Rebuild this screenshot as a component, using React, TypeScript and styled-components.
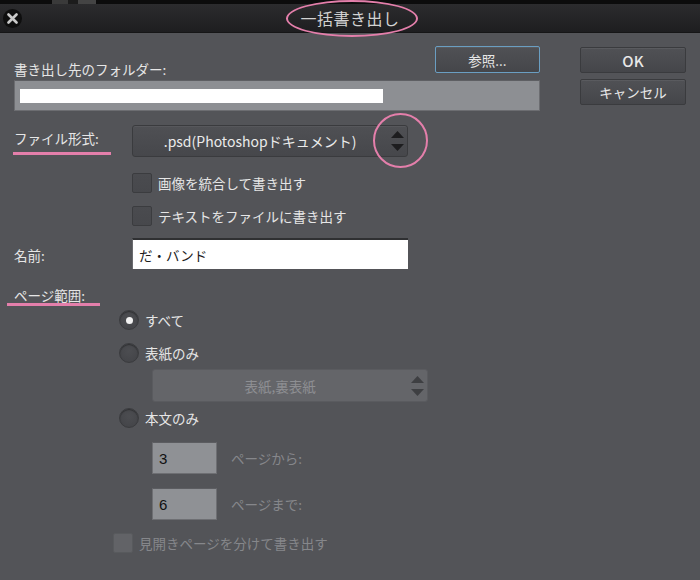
import React from 'react';
import styled, { createGlobalStyle } from 'styled-components';

const Global = createGlobalStyle`
  html, body { margin: 0; padding: 0; background: #535458; }
  body { font-family: "Noto Sans CJK JP", "Noto Sans", sans-serif; overflow: hidden; }
  * { box-sizing: border-box; }
`;

const PINK = '#e47fab';

const Window = styled.div`
  width: 700px;
  height: 580px;
  display: flex;
  flex-direction: column;
  background: #535458;
  overflow: hidden;
`;

const TopStrip = styled.div`
  height: 4px;
  background: #0c0c0c;
  display: flex;
`;

const StripBit = styled.div<{ $w: number; $c: string }>`
  width: ${p => p.$w}px;
  background: ${p => p.$c};
`;

const TitleBar = styled.div`
  height: 29px;
  display: grid;
  grid-template-columns: 1fr auto 1fr;
  align-items: center;
  background: linear-gradient(#2c2c2e, #1e1e20);
  border-bottom: 1px solid #161617;
`;

const CloseButton = styled.div`
  justify-self: start;
  margin-left: 3px;
  width: 19px;
  height: 19px;
  border-radius: 50%;
  background: #0e0e0e;
  display: flex;
  align-items: center;
  justify-content: center;
`;

const Title = styled.div`
  position: relative;
  font-size: 16px;
  color: #d2d2d2;
  line-height: 20px;
  letter-spacing: 0.5px;
`;

const Ring = styled.div<{ $l: number; $t: number; $w: number; $h: number }>`
  position: absolute;
  left: ${p => p.$l}px;
  top: ${p => p.$t}px;
  width: ${p => p.$w}px;
  height: ${p => p.$h}px;
  border: 2.5px solid ${PINK};
  border-radius: 50%;
  pointer-events: none;
  z-index: 2;
`;

const Body = styled.div`
  flex: 1;
  display: grid;
  grid-template-columns: 526px 106px;
  column-gap: 40px;
  padding: 0 14px;
  align-items: start;
`;

const LeftCol = styled.div`
  display: flex;
  flex-direction: column;
`;

const RightCol = styled.div`
  display: flex;
  flex-direction: column;
  gap: 6px;
  margin-top: 14px;
`;

const Button = styled.div<{ $focus?: boolean; $w?: number; $size?: number }>`
  width: ${p => p.$w ?? 106}px;
  height: ${p => (p.$focus ? 27 : 26)}px;
  display: flex;
  align-items: center;
  justify-content: center;
  border-radius: 2px;
  border: 1px solid ${p => (p.$focus ? '#6a9ec2' : '#3a3b3e')};
  background: linear-gradient(#505155, #45464a);
  box-shadow: inset 0 1px 0 rgba(255, 255, 255, 0.06);
  color: #e8e8e8;
  font-size: ${p => p.$size ?? 13.5}px;
  font-weight: ${p => (p.$size && p.$size > 14 ? 500 : 400)};
`;

const FolderHeader = styled.div`
  margin-top: 13px;
  height: 27px;
  display: flex;
  justify-content: space-between;
  align-items: flex-end;
`;

const Label = styled.span<{ $dim?: boolean }>`
  font-size: 13.5px;
  line-height: 15px;
  color: ${p => (p.$dim ? '#86878b' : '#e6e6e6')};
  white-space: nowrap;
`;

const FolderLabel = styled(Label)`
  margin-bottom: -4px;
`;

const FolderField = styled.div`
  margin-top: 7px;
  height: 31px;
  background: #8d8f93;
  border: 1px solid #6c6d71;
  border-top-color: #5e5f63;
  padding: 8px 5px;
`;

const WhiteBar = styled.div`
  width: 363px;
  height: 14px;
  background: #ffffff;
`;

const Row = styled.div<{ $mt: number; $indent?: number; $gap?: number; $align?: string }>`
  display: flex;
  align-items: ${p => p.$align ?? 'center'};
  margin-top: ${p => p.$mt}px;
  padding-left: ${p => p.$indent ?? 0}px;
  gap: ${p => p.$gap ?? 6}px;
`;

const FieldLabel = styled.div`
  width: 118px;
  flex-shrink: 0;
`;

const Underlined = styled.span<{ $w: number; $pt: number; $pb: number; $shift?: number }>`
  display: inline-block;
  width: ${p => p.$w}px;
  margin-left: ${p => -(p.$shift ?? 0)}px;
  padding-left: ${p => p.$shift ?? 0}px;
  padding-top: ${p => p.$pt}px;
  padding-bottom: ${p => p.$pb}px;
  border-bottom: 3px solid ${PINK};
  font-size: 13.5px;
  line-height: 13px;
  color: #e6e6e6;
  white-space: nowrap;
`;

const Select = styled.div<{ $disabled?: boolean; $h: number }>`
  position: relative;
  width: 276px;
  height: ${p => p.$h}px;
  display: flex;
  align-items: center;
  border-radius: 3px;
  border: 1px solid ${p => (p.$disabled ? '#5a5b5f' : '#3a3b3e')};
  background: ${p => (p.$disabled ? '#646569' : 'linear-gradient(#4f5054, #46474b)')};
  box-shadow: ${p => (p.$disabled ? 'none' : 'inset 0 1px 0 rgba(255,255,255,0.05)')};
`;

const SelectText = styled.div<{ $disabled?: boolean; $size: number }>`
  width: 256px;
  text-align: center;
  font-size: ${p => p.$size}px;
  color: ${p => (p.$disabled ? '#8e8f93' : '#ebebeb')};
  white-space: nowrap;
`;

const ArrowBox = styled.div`
  width: 20px;
  display: flex;
  justify-content: center;
`;

const CheckBox = styled.div<{ $disabled?: boolean }>`
  width: 20px;
  height: 20px;
  flex-shrink: 0;
  border-radius: 2px;
  border: 1px solid ${p => (p.$disabled ? '#585a5d' : '#3b3c3f')};
  background: ${p => (p.$disabled ? '#626367' : 'linear-gradient(#4a4b4f, #47484c)')};
`;

const NameInput = styled.div`
  width: 276px;
  height: 31px;
  background: #ffffff;
  border-top: 2px solid #2f3032;
  border-left: 1px solid #6a6b6f;
  display: flex;
  align-items: center;
  padding-left: 6px;
  font-size: 13.5px;
  color: #1c1c1c;
`;

const Radio = styled.div<{ $checked?: boolean }>`
  width: 20px;
  height: 20px;
  flex-shrink: 0;
  border-radius: 50%;
  border: 1px solid #3a3b3e;
  background: radial-gradient(circle at 50% 40%, #4c4d51, #424347);
  box-shadow: inset 0 1px 1px rgba(0, 0, 0, 0.35);
  display: flex;
  align-items: center;
  justify-content: center;
  &::after {
    content: '';
    display: ${p => (p.$checked ? 'block' : 'none')};
    width: 7px;
    height: 7px;
    border-radius: 50%;
    background: #f2f2f2;
  }
`;

const NumberBox = styled.div`
  width: 65px;
  height: 32px;
  background: #8f9195;
  border: 1px solid #6e6f73;
  border-top-color: #5c5d61;
  display: flex;
  align-items: center;
  padding-left: 6px;
  font-family: "Liberation Sans", "Noto Sans", sans-serif;
  font-size: 15px;
  color: #111;
`;

const Arrows = ({ color }: { color: string }) => (
  <svg width="13" height="20" viewBox="0 0 13 20">
    <polygon points="6.5,0 13,7 0,7" fill={color} />
    <polygon points="0,13 13,13 6.5,20" fill={color} />
  </svg>
);

const CloseIcon = () => (
  <svg width="11" height="11" viewBox="0 0 11 11">
    <path d="M1.5 1.5 L9.5 9.5 M9.5 1.5 L1.5 9.5" stroke="#c9c9c9" strokeWidth="2.6" strokeLinecap="round" />
  </svg>
);

export default function App() {
  return (
    <>
      <Global />
      <Window>
        <TopStrip>
          <StripBit $w={52} $c="#0c0c0c" />
          <StripBit $w={16} $c="#3a3a3a" />
          <StripBit $w={10} $c="#1c1c1c" />
          <StripBit $w={18} $c="#444444" />
        </TopStrip>
        <TitleBar>
          <CloseButton>
            <CloseIcon />
          </CloseButton>
          <Title>
            一括書き出し
            <Ring $l={-14} $t={-8} $w={132} $h={37} />
          </Title>
          <div />
        </TitleBar>
        <Body>
          <LeftCol>
            <FolderHeader>
              <FolderLabel>書き出し先のフォルダー:</FolderLabel>
              <Button $focus $w={105}>参照...</Button>
            </FolderHeader>
            <FolderField>
              <WhiteBar />
            </FolderField>

            <Row $mt={14} $gap={0} $align="flex-start">
              <FieldLabel>
                <Underlined $w={98} $pt={6} $pb={7} $shift={1}>ファイル形式:</Underlined>
              </FieldLabel>
              <Select $h={32}>
                <SelectText $size={14}>.psd(Photoshopドキュメント)</SelectText>
                <ArrowBox>
                  <Arrows color="#1d1d1f" />
                </ArrowBox>
                <Ring $l={240} $t={-13} $w={55} $h={55} />
              </Select>
            </Row>

            <Row $mt={16} $indent={118}>
              <CheckBox />
              <Label>画像を統合して書き出す</Label>
            </Row>
            <Row $mt={13} $indent={118}>
              <CheckBox />
              <Label>テキストをファイルに書き出す</Label>
            </Row>

            <Row $mt={12} $gap={0}>
              <FieldLabel>
                <Label>名前:</Label>
              </FieldLabel>
              <NameInput>だ・バンド</NameInput>
            </Row>

            <Row $mt={20} $gap={0}>
              <Underlined $w={93} $pt={0} $pb={1} $shift={7}>ページ範囲:</Underlined>
            </Row>

            <Row $mt={4} $indent={105}>
              <Radio $checked />
              <Label>すべて</Label>
            </Row>
            <Row $mt={13} $indent={105}>
              <Radio />
              <Label>表紙のみ</Label>
            </Row>
            <Row $mt={6} $indent={138}>
              <Select $h={33} $disabled>
                <SelectText $size={13.5} $disabled>表紙,裏表紙</SelectText>
                <ArrowBox>
                  <Arrows color="#3e3f42" />
                </ArrowBox>
              </Select>
            </Row>
            <Row $mt={6} $indent={105}>
              <Radio />
              <Label>本文のみ</Label>
            </Row>

            <Row $mt={14} $indent={138} $gap={14}>
              <NumberBox>3</NumberBox>
              <Label $dim>ページから:</Label>
            </Row>
            <Row $mt={14} $indent={138} $gap={14}>
              <NumberBox>6</NumberBox>
              <Label $dim>ページまで:</Label>
            </Row>

            <Row $mt={13} $indent={99}>
              <CheckBox $disabled />
              <Label $dim>見開きページを分けて書き出す</Label>
            </Row>
          </LeftCol>

          <RightCol>
            <Button $size={15}>OK</Button>
            <Button>キャンセル</Button>
          </RightCol>
        </Body>
      </Window>
    </>
  );
}
